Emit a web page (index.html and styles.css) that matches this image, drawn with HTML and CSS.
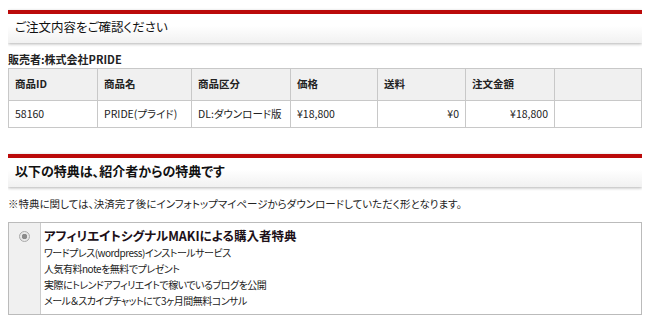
FILE: index.html
```html
<!DOCTYPE html>
<html lang="ja">

<head>
    <meta charset="UTF-8">
    <meta name="viewport" content="width=device-width, initial-scale=1.0">
    <title>ご注文内容の確認</title>
    <link rel="stylesheet" href="styles.css">
</head>

<body>

    <div class="heading">
        <h2>ご注文内容をご確認ください</h2>
    </div>

    <p class="seller">販売者:株式会社PRIDE</p>

    <table class="order">
        <colgroup>
            <col class="c-id">
            <col class="c-name">
            <col class="c-type">
            <col class="c-price">
            <col class="c-ship">
            <col class="c-total">
            <col>
        </colgroup>
        <thead>
            <tr>
                <th>商品ID</th>
                <th>商品名</th>
                <th>商品区分</th>
                <th>価格</th>
                <th>送料</th>
                <th>注文金額</th>
                <th></th>
            </tr>
        </thead>
        <tbody>
            <tr>
                <td>58160</td>
                <td>PRIDE(プライド)</td>
                <td>DL:ダウンロード版</td>
                <td>¥18,800</td>
                <td class="num">¥0</td>
                <td class="num">¥18,800</td>
                <td></td>
            </tr>
        </tbody>
    </table>

    <div class="heading second">
        <h2>以下の特典は、紹介者からの特典です</h2>
    </div>

    <p class="note">※特典に関しては、決済完了後にインフォトップマイページからダウンロードしていただく形となります。</p>

    <div class="bonus">
        <div class="choice">
            <span class="radio"></span>
        </div>
        <div class="detail">
            <h3>アフィリエイトシグナルMAKIによる購入者特典</h3>
            <p>ワードプレス(wordpress)インストールサービス</p>
            <p>人気有料noteを無料でプレゼント</p>
            <p>実際にトレンドアフィリエイトで稼いでいるブログを公開</p>
            <p>メール＆スカイプチャットにて3ヶ月間無料コンサル</p>
        </div>
    </div>

</body>

</html>
```

FILE: styles.css
```css
* {
    padding: 0px;
    margin: 0px;
    box-sizing: border-box;
}

body {
    margin: 8px;
    font-family: "Noto Sans CJK JP", "Liberation Sans", sans-serif;
    font-feature-settings: "palt";
    font-size: 11px;
    color: #222;
    background-color: white;
}

.heading {
    margin-top: 2px;
    height: 33px;
    border-top: 4px solid #bb0a0a;
    background: linear-gradient(#ffffff 40%, #f1f1f1);
    box-shadow: 0 1px 3px rgba(0, 0, 0, 0.3);
    padding-left: 7px;
    padding-bottom: 4px;
    display: flex;
    align-items: center;
}

.heading h2 {
    font-size: 12.5px;
    font-weight: normal;
    color: #111;
}

.heading.second {
    margin-top: 26px;
}

.heading.second h2 {
    font-size: 13px;
    font-weight: bold;
}

.seller {
    margin-top: 9px;
    font-size: 11px;
    font-weight: bold;
    line-height: 14px;
}

.order {
    margin-top: 2px;
    width: 100%;
    table-layout: fixed;
    border-collapse: collapse;
}

.c-id { width: 89px; }
.c-name { width: 94px; }
.c-type { width: 99px; }
.c-price { width: 87px; }
.c-ship { width: 88px; }
.c-total { width: 89px; }

.order th,
.order td {
    border: 1px solid #c8c8c8;
    text-align: left;
    padding: 0 6px 2px;
    font-size: 10.5px;
    white-space: nowrap;
}

.order th {
    height: 32px;
    background-color: #f0f0f0;
    font-weight: bold;
}

.order td {
    height: 27px;
}

.order td.num {
    text-align: right;
}

.note {
    margin-top: 10px;
    font-size: 10.5px;
    line-height: 14px;
}

.bonus {
    margin-top: 11px;
    display: flex;
    border: 1px solid #bbb;
    height: 93px;
}

.choice {
    width: 32px;
    background-color: #f0f0f0;
    border-right: 1px solid #ccc;
    display: flex;
    justify-content: center;
    padding-top: 8px;
}

.radio {
    width: 11px;
    height: 11px;
    border-radius: 50%;
    border: 1px solid #aaa;
    background: radial-gradient(circle, #8c8c8c 0 2.5px, #e8e8e8 3px);
}

.detail {
    padding: 4px 3px;
}

.detail h3 {
    font-size: 12.5px;
    font-weight: bold;
    line-height: 18px;
    color: #201018;
}

.detail p {
    font-size: 10px;
    letter-spacing: -0.5px;
    line-height: 16px;
}
```
